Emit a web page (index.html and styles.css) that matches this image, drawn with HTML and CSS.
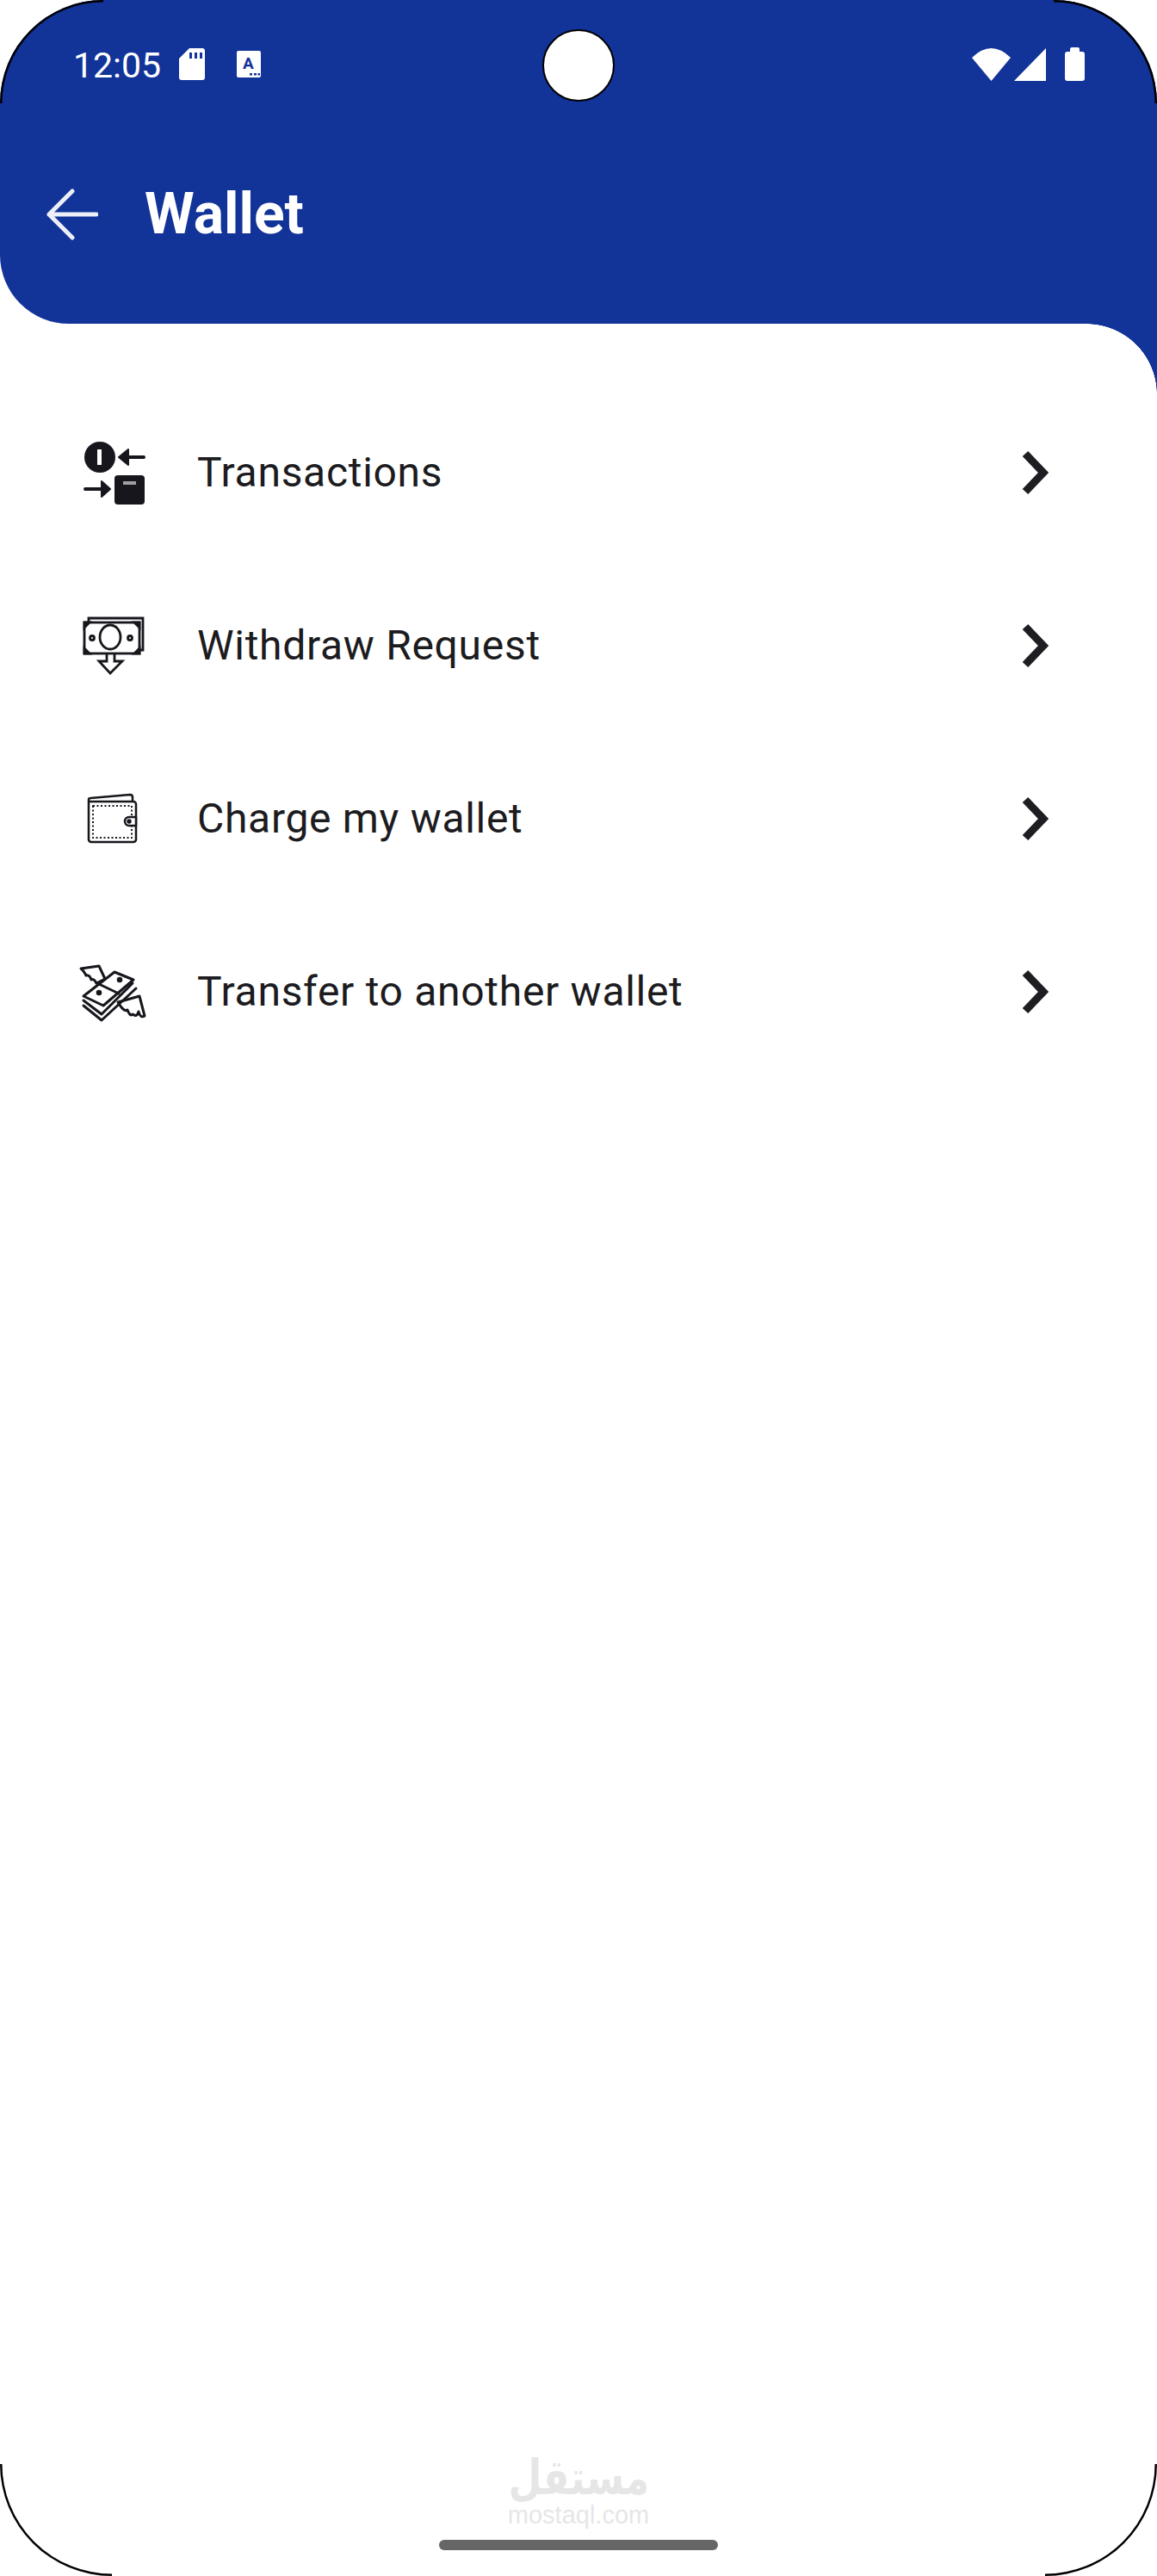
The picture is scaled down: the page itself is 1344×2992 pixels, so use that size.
FILE: index.html
```html
<!DOCTYPE html>
<html lang="en">
<head>
  <meta charset="UTF-8">
  <meta name="viewport" content="width=device-width, initial-scale=1">
  <title>Wallet</title>
  <link rel="stylesheet" href="styles.css">
</head>
<body>
  <div class="phone">
    <header class="top">
      <div class="status">
        <span class="time">12:05</span>
        <svg class="ic-sd" viewBox="0 0 30 37"><path d="M12 0H27a3 3 0 0 1 3 3V34a3 3 0 0 1-3 3H3a3 3 0 0 1-3-3V12Z" fill="#fff"/><path d="M12 5h3v7h-3zM18 5h3v7h-3zM24 5h3v7h-3z" fill="#123398"/></svg>
        <svg class="ic-a" viewBox="0 0 28 31"><rect width="28" height="31" rx="2" fill="#fff"/><text x="13.5" y="21" class="ic-a-letter">A</text><path d="M15 26h3v2.500h-3zM20 26h3v2.500h-3zM24.500 26h2.500v2.500h-2.500z" fill="#123398"/></svg>
        <span class="status-gap"></span>
        <svg class="ic-wifi" viewBox="0 0 45 38"><path d="M0 11Q22.500-11 45 11L22.500 38Z" fill="#fff"/></svg>
        <svg class="ic-signal" viewBox="0 0 37 38"><path d="M37 0V38H0Z" fill="#fff"/></svg>
        <svg class="ic-batt" viewBox="0 0 23 39"><path d="M6 5V2a2 2 0 0 1 2-2h7a2 2 0 0 1 2 2V5h3a3 3 0 0 1 3 3V36a3 3 0 0 1-3 3H3a3 3 0 0 1-3-3V8a3 3 0 0 1 3-3Z" fill="#fff"/></svg>
      </div>
      <div class="camera"></div>
      <div class="title-row">
        <svg class="back" viewBox="0 0 60 60"><path d="M58 30H3M30 3 3 30 30 57" fill="none" stroke="#fff" stroke-width="5" stroke-linecap="round" stroke-linejoin="round" opacity=".92"/></svg>
        <h1>Wallet</h1>
      </div>
    </header>

    <ul class="menu">
      <li class="row">
        <svg class="row-icon" viewBox="0 0 80 80">
          <circle cx="24" cy="22" r="18" fill="#16161c"/>
          <rect x="21" y="13" width="5" height="18" fill="#fff"/>
          <path d="M52 22H75" stroke="#16161c" stroke-width="4" stroke-linecap="round"/>
          <path d="M46 22 57 13V31Z" fill="#16161c" stroke="#16161c" stroke-width="2" stroke-linejoin="round"/>
          <rect x="41" y="43" width="35" height="34" rx="4" fill="#16161c"/>
          <rect x="51" y="50" width="15" height="4" fill="#a0a0a4"/>
          <path d="M7 59H30" stroke="#16161c" stroke-width="4" stroke-linecap="round"/>
          <path d="M36 59 26 50V68Z" fill="#16161c" stroke="#16161c" stroke-width="2" stroke-linejoin="round"/>
        </svg>
        <span class="row-label">Transactions</span>
        <svg class="chevron" viewBox="0 0 40 60"><path d="M8 8 29 30 8 52" fill="none" stroke="#1d1d22" stroke-width="9"/></svg>
      </li>
      <li class="row">
        <svg class="row-icon" viewBox="0 0 80 80" fill="none" stroke="#16161c" stroke-width="2.800">
          <rect x="6" y="13" width="64" height="36"/>
          <path d="M11 12V8H74V45H71"/>
          <ellipse cx="36" cy="30" rx="12" ry="14"/>
          <circle cx="15" cy="31" r="2.500"/>
          <circle cx="59" cy="31" r="2.500"/>
          <path d="M6 19 12 13H6ZM70 19 64 13H70ZM6 43 12 49H6ZM70 43 64 49H70Z" fill="#16161c"/>
          <path d="M32 49V58H23L36 72 50 58H41V49"/>
        </svg>
        <span class="row-label">Withdraw Request</span>
        <svg class="chevron" viewBox="0 0 40 60"><path d="M8 8 29 30 8 52" fill="none" stroke="#1d1d22" stroke-width="9"/></svg>
      </li>
      <li class="row">
        <svg class="row-icon" viewBox="0 0 80 80" fill="none" stroke="#16161c" stroke-width="2.500" stroke-linejoin="round">
          <path d="M11 20V64a3 3 0 0 0 3 3H63a3 3 0 0 0 3-3V23a3 3 0 0 0-3-3Z"/>
          <path d="M11 20V18Q11 16 13 16L59 12Q62 12 62 15V20"/>
          <rect x="16" y="25" width="45" height="37" stroke-width="2" stroke-dasharray="2 2.500"/>
          <path d="M66 38H58a5 5 0 0 0 0 10H66Z" fill="#fff"/>
          <circle cx="58" cy="43" r="1.500" fill="#16161c"/>
        </svg>
        <span class="row-label">Charge my wallet</span>
        <svg class="chevron" viewBox="0 0 40 60"><path d="M8 8 29 30 8 52" fill="none" stroke="#1d1d22" stroke-width="9"/></svg>
      </li>
      <li class="row">
        <svg class="row-icon" viewBox="0 0 80 80" fill="none" stroke="#16161c" stroke-width="3" stroke-linejoin="round" stroke-linecap="round">
          <path d="M2 13 23 10 30 25 20 30Q17 24 14 26 12 20 8 21 5 15 2 13Z"/>
          <path d="M5 45 41 17 63 26 28 56Z"/>
          <path d="M23 31 46 42"/>
          <circle cx="23" cy="41" r="1.800" fill="#16161c"/>
          <circle cx="47" cy="26" r="1.800" fill="#16161c"/>
          <path d="M5 50 26 66 62 30"/>
          <path d="M5 56 26 73 66 36"/>
          <path d="M45 52 70 45 76 68Q71 71 69 63 67 70 62 66 59 69 56 61 52 64 45 52Z"/>
        </svg>
        <span class="row-label">Transfer to another wallet</span>
        <svg class="chevron" viewBox="0 0 40 60"><path d="M8 8 29 30 8 52" fill="none" stroke="#1d1d22" stroke-width="9"/></svg>
      </li>
    </ul>

    <footer class="foot">
      <div class="mark-ar" lang="ar" dir="rtl">مستقل</div>
      <div class="mark-en">mostaql.com</div>
      <div class="home-bar"></div>
    </footer>

    <svg class="corner corner-tl" viewBox="0 0 120 120"><path d="M0 120A120 120 0 0 1 120 0"/></svg>
    <svg class="corner corner-tr" viewBox="0 0 120 120"><path d="M0 120A120 120 0 0 1 120 0"/></svg>
    <svg class="corner corner-bl" viewBox="0 0 130 130"><path d="M0 130A130 130 0 0 1 130 0"/></svg>
    <svg class="corner corner-br" viewBox="0 0 130 130"><path d="M0 130A130 130 0 0 1 130 0"/></svg>
  </div>
</body>
</html>
```

FILE: styles.css
```css
* {
  box-sizing: border-box;
}
body {
  margin: 0;
  background: #fff;
  font-family: Roboto, "Liberation Sans", sans-serif;
}
.phone {
  position: relative;
  width: 1344px;
  height: 2992px;
  display: flex;
  flex-direction: column;
  background: #fff;
  overflow: hidden;
  border-radius: 120px 120px 130px 130px;
}
.top {
  position: relative;
  height: 376px;
  background: #123398;
  border-bottom-left-radius: 80px;
  color: #fff;
}
/* blue notch under the bar, right side */
.top::after {
  content: "";
  position: absolute;
  right: 0;
  top: 100%;
  width: 82px;
  height: 82px;
  background: radial-gradient(circle at 0 100%, transparent 81.500px, #123398 82px);
}
.status {
  display: flex;
  align-items: center;
  height: 39px;
  padding: 0 84px 0 85px;
  position: relative;
  top: 55px;
}
.time {
  font-size: 41px;
  line-height: 39px;
  width: 123px;
  padding-top: 4px;
}
.ic-sd {
  width: 30px;
  height: 37px;
  margin-right: 37px;
}
.ic-a {
  width: 28px;
  height: 31px;
}
.ic-a-letter {
  font-family: Roboto, sans-serif;
  font-weight: 700;
  font-size: 19px;
  text-anchor: middle;
  fill: #123398;
}
.status-gap {
  flex: 1;
}
.ic-wifi {
  width: 45px;
  height: 38px;
  margin-right: 4px;
}
.ic-signal {
  width: 37px;
  height: 38px;
  margin-right: 22px;
}
.ic-batt {
  width: 23px;
  height: 39px;
}
.camera {
  position: absolute;
  left: 630px;
  top: 34px;
  width: 84px;
  height: 84px;
  border-radius: 50%;
  background: #fff;
  border: 2px solid #000;
}
.title-row {
  position: absolute;
  left: 0;
  right: 0;
  top: 211px;
  display: flex;
  align-items: center;
  padding-left: 54px;
  height: 76px;
}
.back {
  width: 60px;
  height: 60px;
  margin-right: 54px;
}
h1 {
  margin: 0;
  font-size: 66px;
  font-weight: 700;
  line-height: 76px;
}
.menu {
  list-style: none;
  margin: 0;
  padding: 72px 0 0;
}
.row {
  display: flex;
  align-items: center;
  height: 201px;
  padding: 0 121px 0 92px;
}
.row-icon {
  width: 80px;
  height: 80px;
  margin-right: 57px;
  flex: none;
}
.row-label {
  flex: 1;
  font-size: 48px;
  letter-spacing: 0.7px;
  color: #1c1b20;
}
.chevron {
  width: 40px;
  height: 60px;
  flex: none;
}
.foot {
  margin-top: auto;
  height: 142px;
  display: flex;
  flex-direction: column;
  align-items: center;
}
.mark-ar {
  font-family: "DejaVu Sans", sans-serif;
  font-weight: 700;
  font-size: 56px;
  line-height: 56px;
  color: #e6e6e6;
  transform: scaleX(0.8);
}
.mark-en {
  font-family: "Liberation Sans", sans-serif;
  font-size: 29px;
  line-height: 30px;
  color: #e6e6e6;
}
.home-bar {
  width: 324px;
  height: 12px;
  margin-top: 14px;
  border-radius: 6px;
  background: #666;
}
.corner {
  position: absolute;
  fill: none;
  stroke: #000;
  stroke-width: 5;
}
.corner-tl {
  left: 0;
  top: 0;
  width: 120px;
  height: 120px;
}
.corner-tr {
  right: 0;
  top: 0;
  width: 120px;
  height: 120px;
  transform: scaleX(-1);
}
.corner-bl {
  left: 0;
  bottom: 0;
  width: 130px;
  height: 130px;
  transform: scaleY(-1);
}
.corner-br {
  right: 0;
  bottom: 0;
  width: 130px;
  height: 130px;
  transform: scale(-1);
}
```
